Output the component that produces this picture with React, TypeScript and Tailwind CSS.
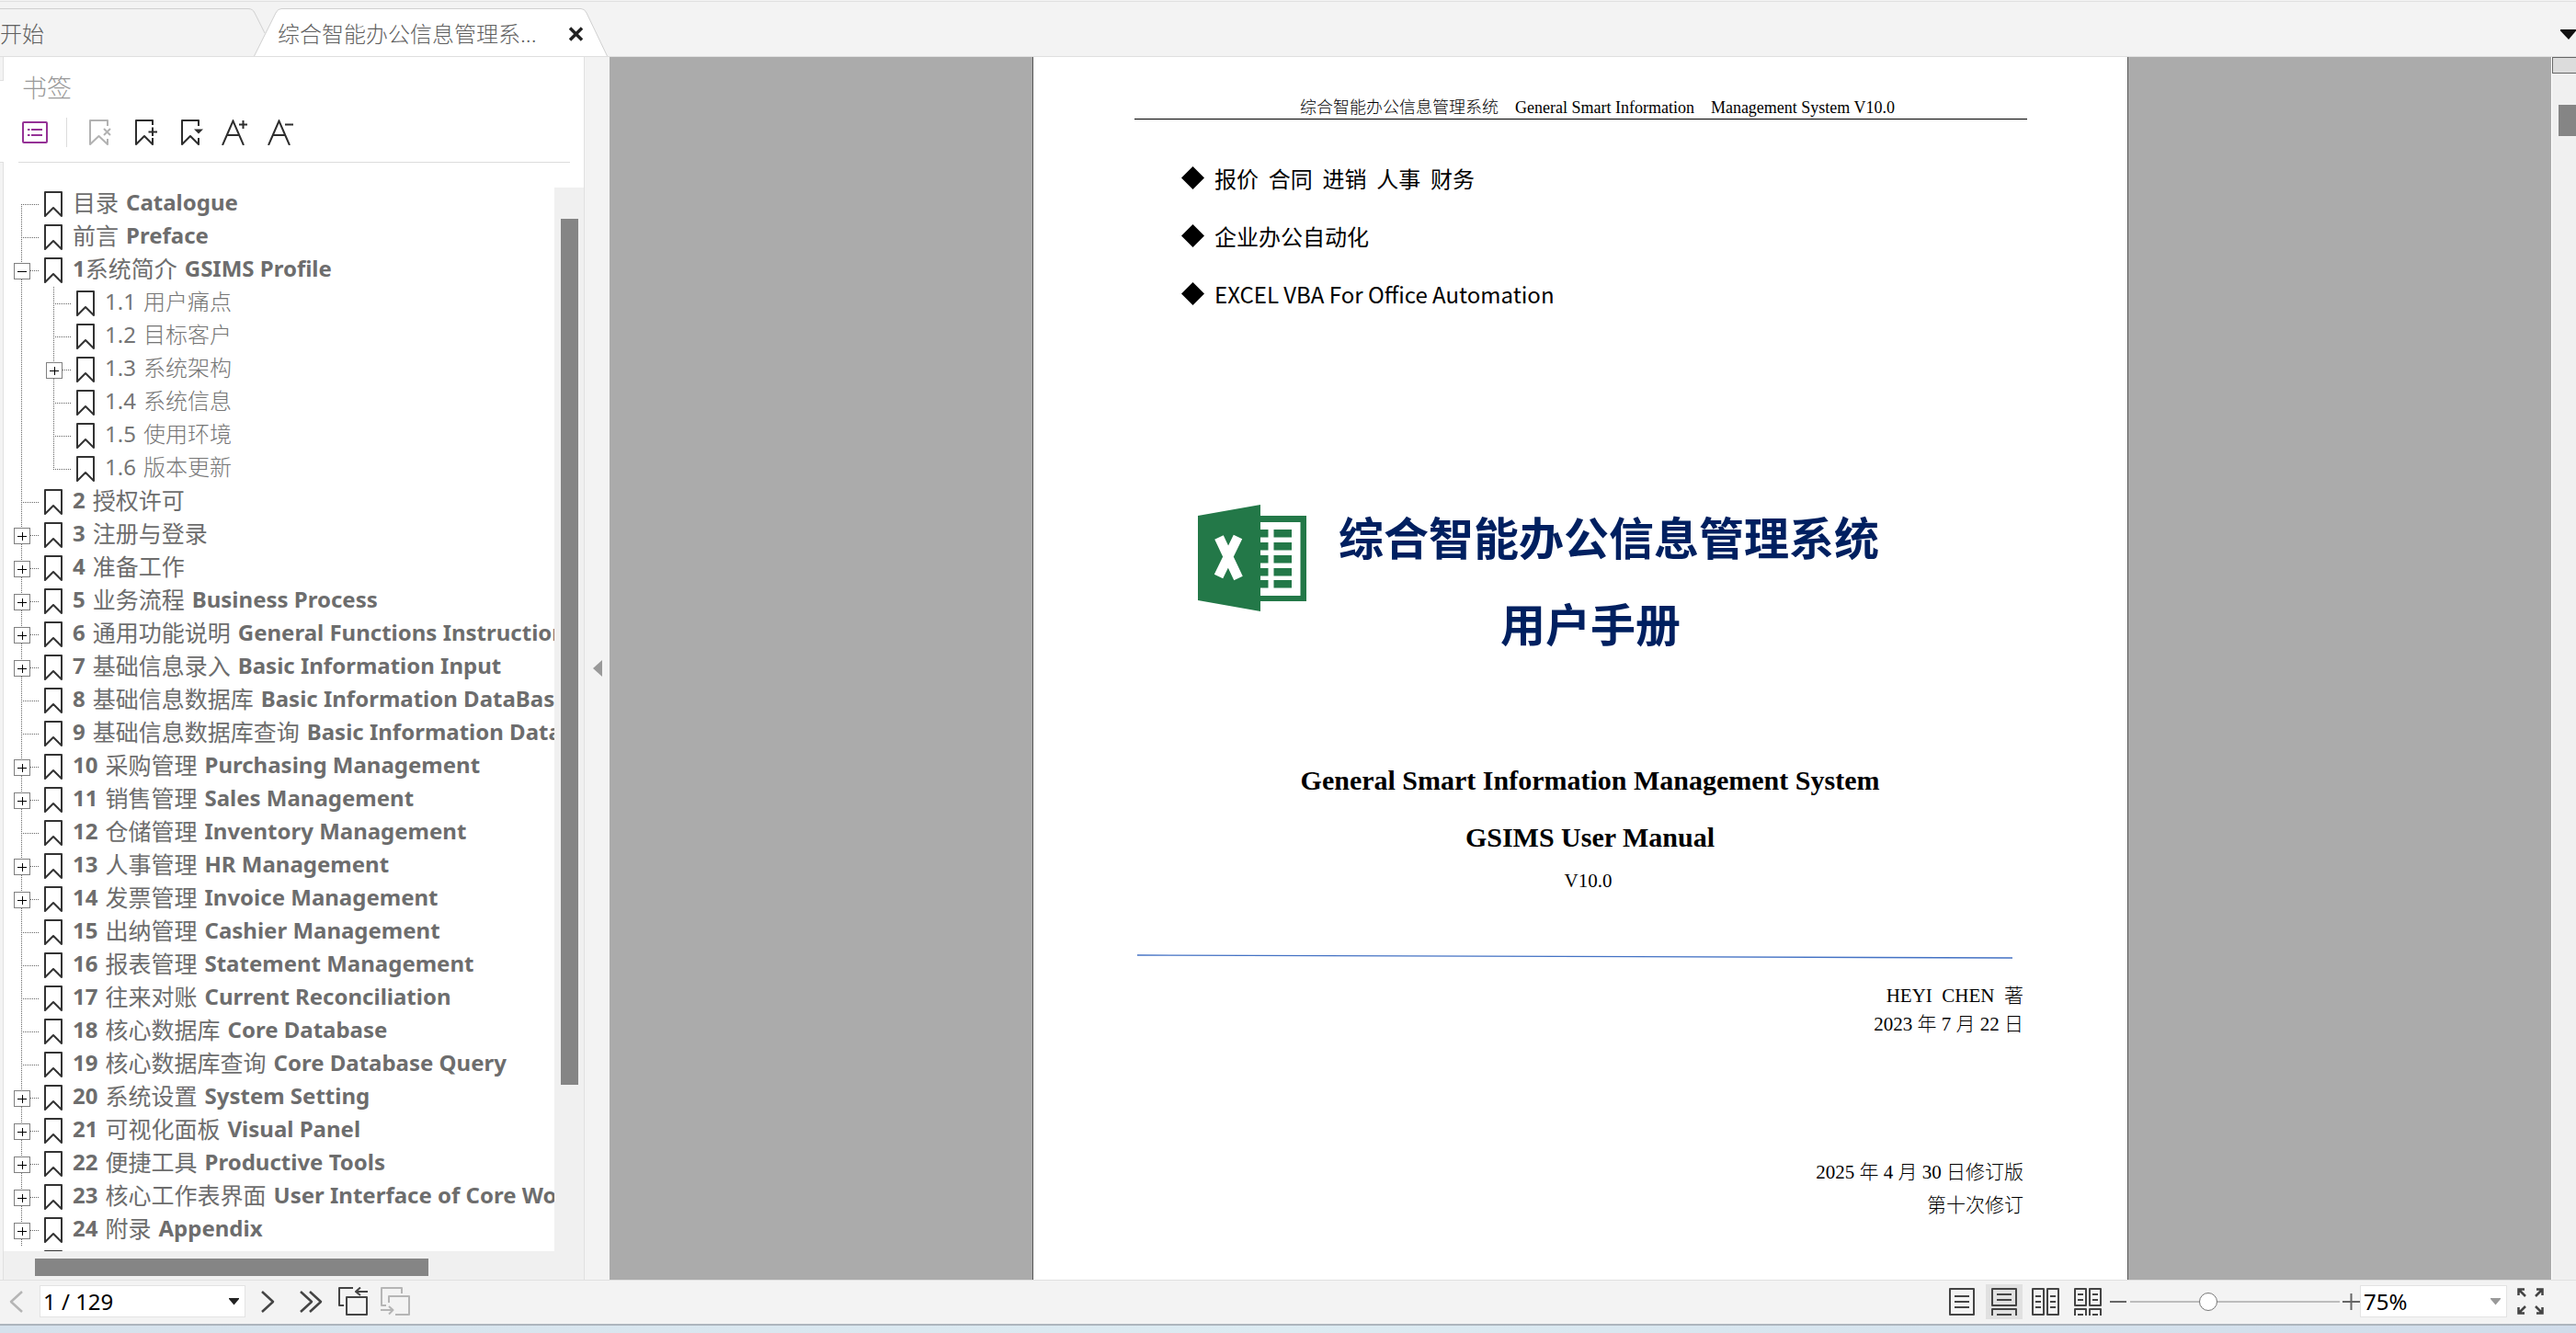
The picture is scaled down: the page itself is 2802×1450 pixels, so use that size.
import React from "react";

type Toggle = "plus" | "minus";
type Bookmark = {
  num?: string;
  zh: string;
  en?: string;
  level?: 1;
  toggle?: Toggle;
  tight?: boolean;
};

const bookmarks: Bookmark[] = [
  { zh: "目录", en: "Catalogue" },
  { zh: "前言", en: "Preface" },
  { num: "1", zh: "系统简介", en: "GSIMS Profile", toggle: "minus", tight: true },
  { num: "1.1", zh: "用户痛点", level: 1 },
  { num: "1.2", zh: "目标客户", level: 1 },
  { num: "1.3", zh: "系统架构", level: 1, toggle: "plus" },
  { num: "1.4", zh: "系统信息", level: 1 },
  { num: "1.5", zh: "使用环境", level: 1 },
  { num: "1.6", zh: "版本更新", level: 1 },
  { num: "2", zh: "授权许可" },
  { num: "3", zh: "注册与登录", toggle: "plus" },
  { num: "4", zh: "准备工作", toggle: "plus" },
  { num: "5", zh: "业务流程", en: "Business Process", toggle: "plus" },
  { num: "6", zh: "通用功能说明", en: "General Functions Instruction", toggle: "plus" },
  { num: "7", zh: "基础信息录入", en: "Basic Information Input", toggle: "plus" },
  { num: "8", zh: "基础信息数据库", en: "Basic Information DataBase" },
  { num: "9", zh: "基础信息数据库查询", en: "Basic Information DataBase Query" },
  { num: "10", zh: "采购管理", en: "Purchasing Management", toggle: "plus" },
  { num: "11", zh: "销售管理", en: "Sales Management", toggle: "plus" },
  { num: "12", zh: "仓储管理", en: "Inventory Management" },
  { num: "13", zh: "人事管理", en: "HR Management", toggle: "plus" },
  { num: "14", zh: "发票管理", en: "Invoice Management", toggle: "plus" },
  { num: "15", zh: "出纳管理", en: "Cashier Management" },
  { num: "16", zh: "报表管理", en: "Statement Management" },
  { num: "17", zh: "往来对账", en: "Current Reconciliation" },
  { num: "18", zh: "核心数据库", en: "Core Database" },
  { num: "19", zh: "核心数据库查询", en: "Core Database Query" },
  { num: "20", zh: "系统设置", en: "System Setting", toggle: "plus" },
  { num: "21", zh: "可视化面板", en: "Visual Panel", toggle: "plus" },
  { num: "22", zh: "便捷工具", en: "Productive Tools", toggle: "plus" },
  { num: "23", zh: "核心工作表界面", en: "User Interface of Core Worksheets", toggle: "plus" },
  { num: "24", zh: "附录", en: "Appendix", toggle: "plus" },
];

function BookmarkIcon() {
  return (
    <svg width="20" height="28" viewBox="0 0 20 28" className="shrink-0" fill="none" stroke="#333" strokeWidth="2" strokeLinejoin="round">
      <path d="M1 27V1h18v26l-9-9z" />
    </svg>
  );
}

function Guides({ level, first, last }: { level: number; first: boolean; last: boolean }) {
  const width = level === 1 ? 79 : 44;
  return (
    <svg width={width} height="36" viewBox={`0 0 ${width} 36`} fill="none" stroke="#666" strokeDasharray="1 1" shapeRendering="crispEdges">
      <path d={first ? "M19.5 18V36" : "M19.5 0V36"} />
      {level === 0 && <path d="M19 18.5H38" />}
      {level === 1 && <path d={last ? "M54.5 0V19" : "M54.5 0V36"} />}
      {level === 1 && <path d="M54 18.5H73" />}
    </svg>
  );
}

function ToggleGlyph({ kind }: { kind: Toggle }) {
  return (
    <svg width="18" height="18" viewBox="0 0 18 18" fill="#fff" shapeRendering="crispEdges">
      <rect x="0.5" y="0.5" width="17" height="17" stroke="#808080" />
      <path d={kind === "plus" ? "M4 9.5H14M9.5 5V14" : "M4 9.5H14"} stroke="#000" />
    </svg>
  );
}

function BookmarkRow({ item, first, last }: { item: Bookmark; first: boolean; last: boolean }) {
  const child = item.level === 1;
  return (
    <li className="flex h-9 items-center gap-[11px]">
      <div className="flex items-center">
        <div className="relative">
          <Guides level={child ? 1 : 0} first={first} last={last} />
          {item.toggle && (
            <button
              type="button"
              aria-label={item.toggle === "plus" ? "展开" : "折叠"}
              className={child ? "absolute top-[10px] left-[46px]" : "absolute top-[10px] left-[11px]"}
            >
              <ToggleGlyph kind={item.toggle} />
            </button>
          )}
        </div>
        <BookmarkIcon />
      </div>
      <a
        href="#page"
        className={
          child
            ? "flex items-center gap-2 pb-1 text-2xl leading-8 whitespace-nowrap text-[#757575]"
            : "flex items-center gap-2 pb-1 text-2xl leading-8 font-bold whitespace-nowrap text-[#6d6d6d]"
        }
      >
        <span className={item.tight ? "flex" : "flex gap-2"}>
          {item.num && <span>{item.num}</span>}
          <span className={child ? "font-light" : "text-[25px] font-normal"}>{item.zh}</span>
        </span>
        {item.en && <span>{item.en}</span>}
      </a>
    </li>
  );
}

function TabBar() {
  return (
    <header className="relative flex h-[62px] shrink-0 items-center border-b border-[#dfdfdf] bg-[#f3f3f3] pt-[13px] text-2xl font-light text-[#5f5f5f]">
      <svg className="absolute top-0 left-0" width="664" height="62" viewBox="0 0 664 62" fill="none" stroke="#d0d0d0">
        <path d="M0 9.5H270Q275 9.5 277 14L288 36" />
        <path d="M276.500 61L300 14Q302 9.500 306 9.500H632Q636 9.500 638 14L660.500 61" fill="#fff" />
      </svg>
      <div className="absolute top-px left-0 h-px w-full bg-[#e0e0e0]" />
      <nav className="relative flex flex-1 items-center" aria-label="标签页">
        <button type="button" className="w-[302px] text-left">开始</button>
        <button type="button" className="w-[316px] text-left">综合智能办公信息管理系...</button>
        <button type="button" aria-label="关闭">
          <svg width="17" height="16" viewBox="0 0 17 16" stroke="#222" strokeWidth="3.500">
            <path d="M2 1.500L15 14.500M15 1.500L2 14.500" />
          </svg>
        </button>
      </nav>
      <button type="button" aria-label="更多标签" className="relative">
        <svg width="17" height="11" viewBox="0 0 17 11" fill="#111">
          <path d="M0 0H17V1.500L9 11L0 1.500z" />
        </svg>
      </button>
    </header>
  );
}

function Toolbar() {
  return (
    <div className="flex items-center" role="toolbar" aria-label="书签工具">
      <button type="button" aria-label="选项" className="mr-5">
        <svg width="28" height="24" viewBox="0 0 28 24" fill="none" stroke="#953196" strokeWidth="2">
          <rect x="1" y="1" width="26" height="22" rx="1" />
          <path d="M6 9h2.500M10 9h12M6 15h2.500M10 15h12" />
        </svg>
      </button>
      <div className="mr-6 h-8 w-px bg-[#dcdcdc]" />
      <div className="flex gap-[26px]">
        <button type="button" aria-label="删除书签" disabled>
          <svg width="24" height="28" viewBox="0 0 24 28" fill="none" stroke="#b2b2b2" strokeWidth="2" strokeLinejoin="round">
            <path d="M20 7V1H1V27L10.500 18L20 27V21" />
            <path d="M16 10L23 17M23 10L16 17" />
          </svg>
        </button>
        <button type="button" aria-label="添加书签">
          <svg width="24" height="28" viewBox="0 0 24 28" fill="none" stroke="#2d2d2d" strokeWidth="2" strokeLinejoin="round">
            <path d="M19 6V1H1V27L10 18L19 27V20M14.500 13.500H24M19 8.500V18" />
          </svg>
        </button>
        <button type="button" aria-label="书签菜单">
          <svg width="24" height="28" viewBox="0 0 24 28" fill="none" stroke="#2d2d2d" strokeWidth="2" strokeLinejoin="round">
            <path d="M19 7V1H1V27L10 18L19 27V20" />
            <path d="M14 10.500H24L19 15.500z" fill="#2d2d2d" stroke="none" />
          </svg>
        </button>
      </div>
      <div className="ml-5 flex gap-[22px]">
        <button type="button" aria-label="放大文字">
          <svg width="28" height="28" viewBox="0 0 28 28" fill="none" stroke="#2d2d2d" strokeWidth="2">
            <path d="M1 28L12.500 1.500L24 28M5.500 17H19.500M19 5.500H28M23.500 1V10" />
          </svg>
        </button>
        <button type="button" aria-label="缩小文字">
          <svg width="28" height="28" viewBox="0 0 28 28" fill="none" stroke="#2d2d2d" strokeWidth="2">
            <path d="M1 28L12.500 1.500L24 28M5.500 17H19.500M19 5.500H28" />
          </svg>
        </button>
      </div>
    </div>
  );
}

function Sidebar() {
  return (
    <aside className="flex w-[663px] shrink-0 bg-white">
      <div className="flex w-1 shrink-0 flex-col">
        <div className="h-[26px] border-r border-b border-[#e0e0e0] bg-[#f3f3f3]" />
        <div className="h-[88px] bg-white" />
        <div className="flex-1 border-t border-r border-[#e0e0e0] bg-[#f3f3f3]" />
      </div>
      <div className="flex min-w-0 flex-1 flex-col">
        <div className="flex h-[142px] shrink-0 flex-col px-4">
          <h2 className="mt-3.5 ml-1 text-[27px] leading-10 font-light text-[#999]">书签</h2>
          <div className="mt-3 ml-1"><Toolbar /></div>
          <div className="mt-4 h-px w-[600px] bg-[#dcdcdc]" />
        </div>
        <div className="flex min-h-0 flex-1">
          <ul className="min-w-0 flex-1 overflow-hidden">
            {bookmarks.map((item, i) => (
              <BookmarkRow key={i} item={item} first={i === 0} last={i === 8} />
            ))}
            <li className="flex pt-1">
              <div className="w-11 shrink-0" />
              <BookmarkIcon />
            </li>
          </ul>
          <div className="w-8 shrink-0 bg-[#f0f0f0] pt-[34px] pl-[7px]">
            <div className="h-[942px] w-[19px] bg-[#858585]" />
          </div>
        </div>
        <div className="h-[31px] shrink-0 bg-[#f0f0f0] pt-2 pl-[34px]">
          <div className="h-[19px] w-[428px] bg-[#858585]" />
        </div>
      </div>
      <button type="button" aria-label="收起面板" className="flex w-7 shrink-0 items-center justify-center border-l border-[#e0e0e0] bg-[#f3f3f3]">
        <svg width="10" height="18" viewBox="0 0 10 18" fill="#999">
          <path d="M0 9L10 0V18z" />
        </svg>
      </button>
    </aside>
  );
}

function ExcelLogo() {
  return (
    <svg width="118" height="116" viewBox="0 0 118 116" className="mt-[13px] shrink-0" fill="#237848">
      <path d="M60 12H118V105H60z" />
      <path d="M60 19H111.500V99H60z" fill="#fff" />
      {[27, 41, 55, 69, 82].map((y) => (
        <path key={y} d={`M60 ${y}h16.500v8.500h-16.500zM82.500 ${y}h19.500v8.500h-19.500z`} />
      ))}
      <path d="M0 12L68 0V116L0 104z" />
      <path d="M23 35.500L44 80M43.500 35L22.500 78" stroke="#fff" strokeWidth="10.500" />
    </svg>
  );
}

const highlights = ["报价  合同  进销  人事  财务", "企业办公自动化", "EXCEL VBA For Office Automation"];

function DocumentPage() {
  return (
    <article
      id="page"
      className="w-[1192px] border-x border-[#555] bg-white pr-[109px] pl-[110px] font-['Liberation_Serif','Noto_Sans_CJK_SC',serif] text-[21px] text-black"
    >
      <p className="mt-[43px] border-b border-black pl-9 text-center text-lg leading-6 font-light whitespace-pre">
        综合智能办公信息管理系统    General Smart Information    Management System V10.0
      </p>
      <ul className="mt-8 pl-[51px] font-['Noto_Sans_CJK_SC',sans-serif] text-2xl">
        {highlights.map((h) => (
          <li key={h} className="flex h-[63px] items-center gap-[11px] whitespace-pre">
            <svg width="25" height="25" viewBox="0 0 25 25">
              <path d="M12.500 0L25 12.500L12.500 25L0 12.500z" />
            </svg>
            {h}
          </li>
        ))}
      </ul>
      <div className="mt-[185px] flex gap-[35px] pl-[69px]">
        <ExcelLogo />
        <h1 className="text-center font-['Noto_Sans_CJK_SC',sans-serif] text-[49px] leading-[94px] font-bold text-[#002060]">
          <span className="block">综合智能办公信息管理系统</span>
          <span className="block pr-10">用户手册</span>
        </h1>
      </div>
      <h2 className="mt-[94px] pl-5 text-center text-3xl leading-[62px] font-bold">
        General Smart Information Management System
        <br />
        GSIMS User Manual
      </h2>
      <p className="pl-4 text-center leading-8">V10.0</p>
      <svg className="mt-16 ml-[3px]" width="952" height="5" viewBox="0 0 952 5" stroke="#4472c4" strokeWidth="1.300">
        <path d="M0 1L952 4" />
      </svg>
      <p className="mt-[25px] pr-1 text-right leading-[31px] font-light whitespace-pre">
        HEYI  CHEN  著
        <br />
        2023 年 7 月 22 日
      </p>
      <p className="mt-[127px] pr-1 text-right leading-9 font-light">
        2025 年 4 月 30 日修订版
        <br />
        第十次修订
      </p>
    </article>
  );
}

function Combo({ label, value, caret, className }: { label: string; value: string; caret: string; className: string }) {
  return (
    <div className={className}>
      <select aria-label={label} className="h-[35px] w-full appearance-none border border-[#e3e3e3] bg-white pl-[3px] text-2xl leading-8 text-black">
        <option>{value}</option>
      </select>
      <svg className="pointer-events-none absolute top-[14px] right-[7px]" width="11" height="8" viewBox="0 0 11 8" fill={caret}>
        <path d="M0 0H11V1L5.500 7.500L0 1z" />
      </svg>
    </div>
  );
}

function StatusBar() {
  const line = { fill: "none", stroke: "#444", strokeWidth: 2, strokeLinejoin: "round" as const };
  return (
    <footer className="flex h-12 shrink-0 items-center border-t border-[#e0e0e0] bg-[#f3f3f3] pr-[35px] pb-0.5 pl-[10px]">
      <button type="button" aria-label="上一页" disabled>
        <svg width="15" height="24" viewBox="0 0 15 24" {...line} stroke="#b5b5b5" strokeWidth="2.500">
          <path d="M14 1L2 12L14 23" />
        </svg>
      </button>
      <Combo label="页码" value="1 / 129" caret="#222" className="relative ml-[18px] w-56" />
      <button type="button" aria-label="下一页" className="ml-[17px]">
        <svg width="15" height="24" viewBox="0 0 15 24" {...line} strokeWidth="2.500">
          <path d="M1 1L13 12L1 23" />
        </svg>
      </button>
      <button type="button" aria-label="最后一页" className="ml-[27px]">
        <svg width="25" height="24" viewBox="0 0 25 24" {...line} strokeWidth="2.500">
          <path d="M1 1L13 12L1 23M11 1L23 12L11 23" />
        </svg>
      </button>
      <button type="button" aria-label="上一视图" className="ml-[17px]">
        <svg width="32" height="31" viewBox="0 0 32 31" {...line}>
          <path d="M16 1H1V20H6M9 11H31V30H9zM32 5H19M24 0.500L19 5L24 9" />
        </svg>
      </button>
      <button type="button" aria-label="下一视图" className="ml-[14px]" disabled>
        <svg width="32" height="31" viewBox="0 0 32 31" {...line} stroke="#b5b5b5">
          <path d="M6 20H1V1H23V7M9 17V10H31V30H16M0 25H13M9 21L13.500 25L9 29.500" />
        </svg>
      </button>

      <div className="flex-1" />

      <button type="button" aria-label="单页" className="mr-3">
        <svg width="28" height="30" viewBox="0 0 28 30" {...line}>
          <path d="M1 1H27V29H1zM6 9H22M6 15H22M6 21H22" />
        </svg>
      </button>
      <button type="button" aria-label="连续" aria-pressed="true" className="mr-[10px] flex h-[38px] w-10 items-center justify-center bg-[#e1e1e1]">
        <svg width="28" height="30" viewBox="0 0 28 30" {...line}>
          <path d="M1 1H27V19H1zM6 7H22M6 13H22M1 30V23H27V30M6 29H22" />
        </svg>
      </button>
      <button type="button" aria-label="双页" className="mr-4">
        <svg width="30" height="30" viewBox="0 0 30 30" {...line}>
          <path d="M1 1H13V29H1zM17 1H29V29H17zM4 9H10M4 15H10M4 21H10M20 9H26M20 15H26M20 21H26" />
        </svg>
      </button>
      <button type="button" aria-label="双页连续" className="mr-[9px]">
        <svg width="30" height="30" viewBox="0 0 30 30" {...line}>
          <path d="M1 1H13V19H1zM17 1H29V19H17zM4 7H10M4 13H10M20 7H26M20 13H26M1 30V23H13V30M17 30V23H29V30M4 29H10M20 29H26" />
        </svg>
      </button>
      <button type="button" aria-label="缩小" className="mr-1">
        <svg width="18" height="18" viewBox="0 0 18 18" stroke="#666" strokeWidth="2">
          <path d="M0 9H18" />
        </svg>
      </button>
      <input
        type="range"
        aria-label="缩放"
        min="0"
        max="100"
        defaultValue="36"
        className="mr-[3px] h-5 w-[228px] appearance-none bg-transparent [&::-webkit-slider-runnable-track]:h-0.5 [&::-webkit-slider-runnable-track]:bg-[#bcbcbc] [&::-webkit-slider-thumb]:-mt-[9px] [&::-webkit-slider-thumb]:size-5 [&::-webkit-slider-thumb]:appearance-none [&::-webkit-slider-thumb]:rounded-full [&::-webkit-slider-thumb]:border [&::-webkit-slider-thumb]:border-[#777] [&::-webkit-slider-thumb]:bg-white"
      />
      <button type="button" aria-label="放大">
        <svg width="19" height="18" viewBox="0 0 19 18" stroke="#666" strokeWidth="2">
          <path d="M0 9H19M9.500 0V18" />
        </svg>
      </button>
      <Combo label="缩放比例" value="75%" caret="#999" className="relative w-40" />
      <button type="button" aria-label="全屏" className="ml-[11px]">
        <svg width="29" height="29" viewBox="0 0 29 29" {...line} strokeLinejoin="miter" strokeWidth="2.500">
          <path d="M1.500 8V1.500H8M1.500 1.500L9 9M21 1.500H27.500V8M27.500 1.500L20 9M1.500 21V27.500H8M1.500 27.500L9 20M21 27.500H27.500V21M27.500 27.500L20 20" />
        </svg>
      </button>
    </footer>
  );
}

export default function App() {
  return (
    <div className="flex h-screen flex-col overflow-hidden font-['Noto_Sans','Noto_Sans_CJK_SC',sans-serif]">
      <TabBar />
      <div className="flex min-h-0 flex-1">
        <Sidebar />
        <main className="flex min-w-0 flex-1 justify-center overflow-hidden bg-[#ababab]">
          <DocumentPage />
        </main>
        <div className="w-[27px] shrink-0 border-l border-white bg-[#f0f0f0]">
          <div className="h-[18px] border border-r-0 border-[#666] bg-[#dcdcdc]" />
          <div className="mt-[34px] ml-[7px] h-[34px] bg-[#858585]" />
        </div>
      </div>
      <StatusBar />
      <div className="h-[10px] shrink-0 border-t-2 border-[#adb5bd] bg-linear-to-r from-[#d5e1ec] via-[#dcebf2] to-[#d0dcea]" />
    </div>
  );
}
